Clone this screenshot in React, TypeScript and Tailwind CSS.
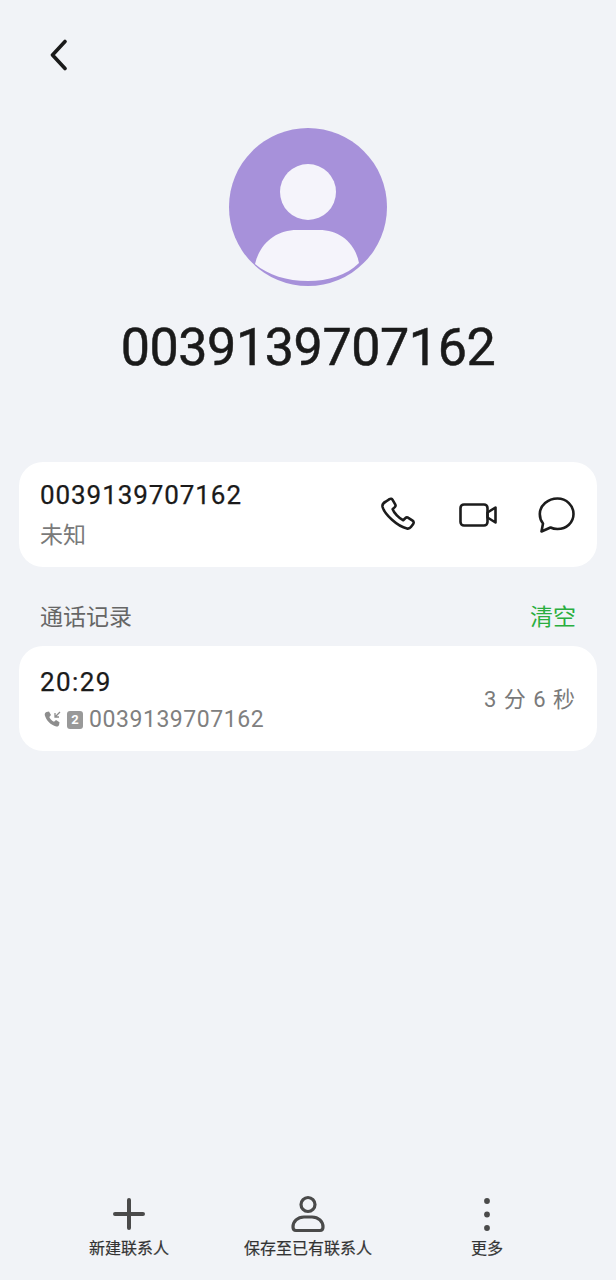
import React from "react";

const font = { fontFamily: 'Roboto, "Noto Sans CJK SC", sans-serif' };

function Back() {
  return (
    <svg width="20" height="32" viewBox="0 0 20 32" fill="none" stroke="#1a1a1a" strokeWidth="3.600" strokeLinecap="round" strokeLinejoin="round">
      <path d="M16 2.500 3.500 16 16 29.500" />
    </svg>
  );
}

function Avatar() {
  return (
    <svg width="158" height="158" viewBox="0 0 158 158">
      <circle cx="79" cy="79" r="79" fill="#a791da" />
      <circle cx="79" cy="64" r="28" fill="#f5f4fb" />
      <path d="M26 136C31 115 47 102 68 102H90C111 102 126 115 130 135C118 147 99 153 79 153C58 153 39 147 26 136Z" fill="#f5f4fb" />
    </svg>
  );
}

function Phone() {
  return (
    <svg width="38" height="38" viewBox="0 0 38 38" fill="none" stroke="#1c1c1c" strokeWidth="2.600" strokeLinejoin="round">
      <path d="M6 5.500 9.500 3.200c1.200-.8 2.400-.5 3.100.7l2.600 4.400c.6 1 .4 2-.4 2.800l-2.200 2c1.200 3.600 6.600 9.600 10.600 11.100l2.300-2.200c.8-.8 1.900-.9 2.800-.2l4.300 2.900c1.200.8 1.400 2.100.6 3.200l-2.300 3.100c-1 1.300-2.400 1.900-4 1.500C17.500 30.400 4.700 18.500 2.600 11c-.5-2 .9-4.300 3.400-5.500Z" />
    </svg>
  );
}

function Video() {
  return (
    <svg width="38" height="26" viewBox="0 0 38 26" fill="none" stroke="#1c1c1c" strokeWidth="2.600" strokeLinejoin="round">
      <rect x="1.500" y="2.500" width="27" height="21" rx="3.500" />
      <path d="M28.500 10.500 36.500 5.500V20.500L28.500 15.500Z" />
    </svg>
  );
}

function Message() {
  return (
    <svg width="38" height="38" viewBox="0 0 38 38" fill="none" stroke="#1c1c1c" strokeWidth="2.600" strokeLinejoin="round">
      <path d="M19.500 2.500C28.500 2.500 35.500 9.500 35.500 18S28.500 33 19.500 33c-2.500 0-5-.5-7-1.500L3.500 35.500l1.500-8C3 25 1.800 21.500 1.800 18 1.800 9.500 10 2.500 19.500 2.500Z" />
    </svg>
  );
}

function SmallCall() {
  return (
    <svg width="19" height="19" viewBox="0 0 19 19" fill="none">
      <path d="M3.500 2 6 1.500 8 5 6.300 7c.8 2 2.700 3.900 4.700 4.800L13 10l3.500 2.200-.4 2.600c-.3 1.400-1.500 2.100-2.900 1.700C7.800 15 3.200 10.200 1.800 5.200 1.500 3.800 2.200 2.500 3.500 2Z" fill="#8d8d8d" />
      <path d="M17 2 12 7M12 3v4h4" stroke="#8d8d8d" strokeWidth="1.300" />
    </svg>
  );
}

function SimBadge() {
  return (
    <span className="flex h-[18px] w-[16px] items-center justify-center rounded-[3px] bg-[#999999] text-[13px] leading-none font-bold text-white">2</span>
  );
}

function Plus() {
  return (
    <svg width="34" height="34" viewBox="0 0 34 34" stroke="#4a4a4a" strokeWidth="4" strokeLinecap="round">
      <path d="M17 3V31M3 17H31" />
    </svg>
  );
}

function Person() {
  return (
    <svg width="34" height="38" viewBox="0 0 34 38" fill="none" stroke="#4a4a4a" strokeWidth="3.200">
      <circle cx="17" cy="9.500" r="7" />
      <path d="M13 22H21C27.500 22 32 26.500 32 32C32 34.500 31 35.500 29 35.500H5C3 35.500 2 34.500 2 32 2 26.500 6.500 22 13 22Z" />
    </svg>
  );
}

function Dots() {
  return (
    <svg width="8" height="34" viewBox="0 0 8 34" fill="#4a4a4a">
      <circle cx="4" cy="4" r="2.900" />
      <circle cx="4" cy="17.500" r="2.900" />
      <circle cx="4" cy="31" r="2.900" />
    </svg>
  );
}

export default function App() {
  return (
    <div style={font} className="flex h-[1280px] w-[616px] flex-col overflow-hidden bg-[#f1f3f7]">
      <div className="flex h-[128px] items-start pt-[39px] pl-[49px]">
        <Back />
      </div>
      <div className="flex justify-center">
        <Avatar />
      </div>
      <div className="mt-[31px] h-[62px] text-center text-[52px] leading-[62px] tracking-[-0.4px] text-[#1a1a1a] [-webkit-text-stroke:0.5px_#1a1a1a]">0039139707162</div>

      <div className="mx-[19px] mt-[83px] flex h-[105px] items-center justify-between rounded-[24px] bg-white px-[21px]">
        <div className="flex flex-col">
          <span className="text-[26px] leading-[34px] tracking-[0.92px] text-[#1a1a1a] [-webkit-text-stroke:0.25px_#1a1a1a]">0039139707162</span>
          <span className="mt-[9px] text-[23px] leading-[30px] text-[#7a7a7a]">未知</span>
        </div>
        <div className="flex items-center gap-[41px]">
          <span className="mt-[1px] flex"><Phone /></span>
          <Video />
          <Message />
        </div>
      </div>

      <div className="mx-[40px] mt-[36px] flex h-[30px] items-center justify-between">
        <span className="text-[23px] leading-[30px] text-[#666666]">通话记录</span>
        <span className="text-[23px] leading-[30px] text-[#2aae3f]">清空</span>
      </div>

      <div className="mx-[19px] mt-[13px] flex h-[105px] items-center justify-between rounded-[24px] bg-white px-[21px]">
        <div className="mt-[2px] flex flex-col">
          <span className="text-[26px] leading-[34px] tracking-[1.4px] text-[#1a1a1a] [-webkit-text-stroke:0.25px_#1a1a1a]">20:29</span>
          <div className="mt-[6px] flex items-center gap-[5px]">
            <span className="ml-[3px] flex"><SmallCall /></span>
            <SimBadge />
            <span className="ml-[1px] text-[23px] leading-[30px] tracking-[0.55px] text-[#808080]">0039139707162</span>
          </div>
        </div>
        <span className="mt-[2px] text-[22px] leading-[30px] tracking-[1px] text-[#7a7a7a]">3 分 6 秒</span>
      </div>

      <div className="mt-auto mb-[20px] flex h-[66px] items-end">
        <div className="flex w-[258px] flex-col items-center">
          <div className="flex h-[38px] items-center"><Plus /></div>
          <span className="mt-[5px] text-[16px] leading-[22px] text-[#333333] [-webkit-text-stroke:0.2px_#333333]">新建联系人</span>
        </div>
        <div className="ml-[-1px] flex w-[102px] flex-col items-center">
          <div className="flex h-[38px] items-center"><Person /></div>
          <span className="mt-[5px] text-[16px] leading-[22px] whitespace-nowrap text-[#333333] [-webkit-text-stroke:0.2px_#333333]">保存至已有联系人</span>
        </div>
        <div className="ml-[77px] flex w-[102px] flex-col items-center">
          <div className="flex h-[38px] items-center"><Dots /></div>
          <span className="mt-[5px] text-[16px] leading-[22px] text-[#333333] [-webkit-text-stroke:0.2px_#333333]">更多</span>
        </div>
      </div>
    </div>
  );
}
